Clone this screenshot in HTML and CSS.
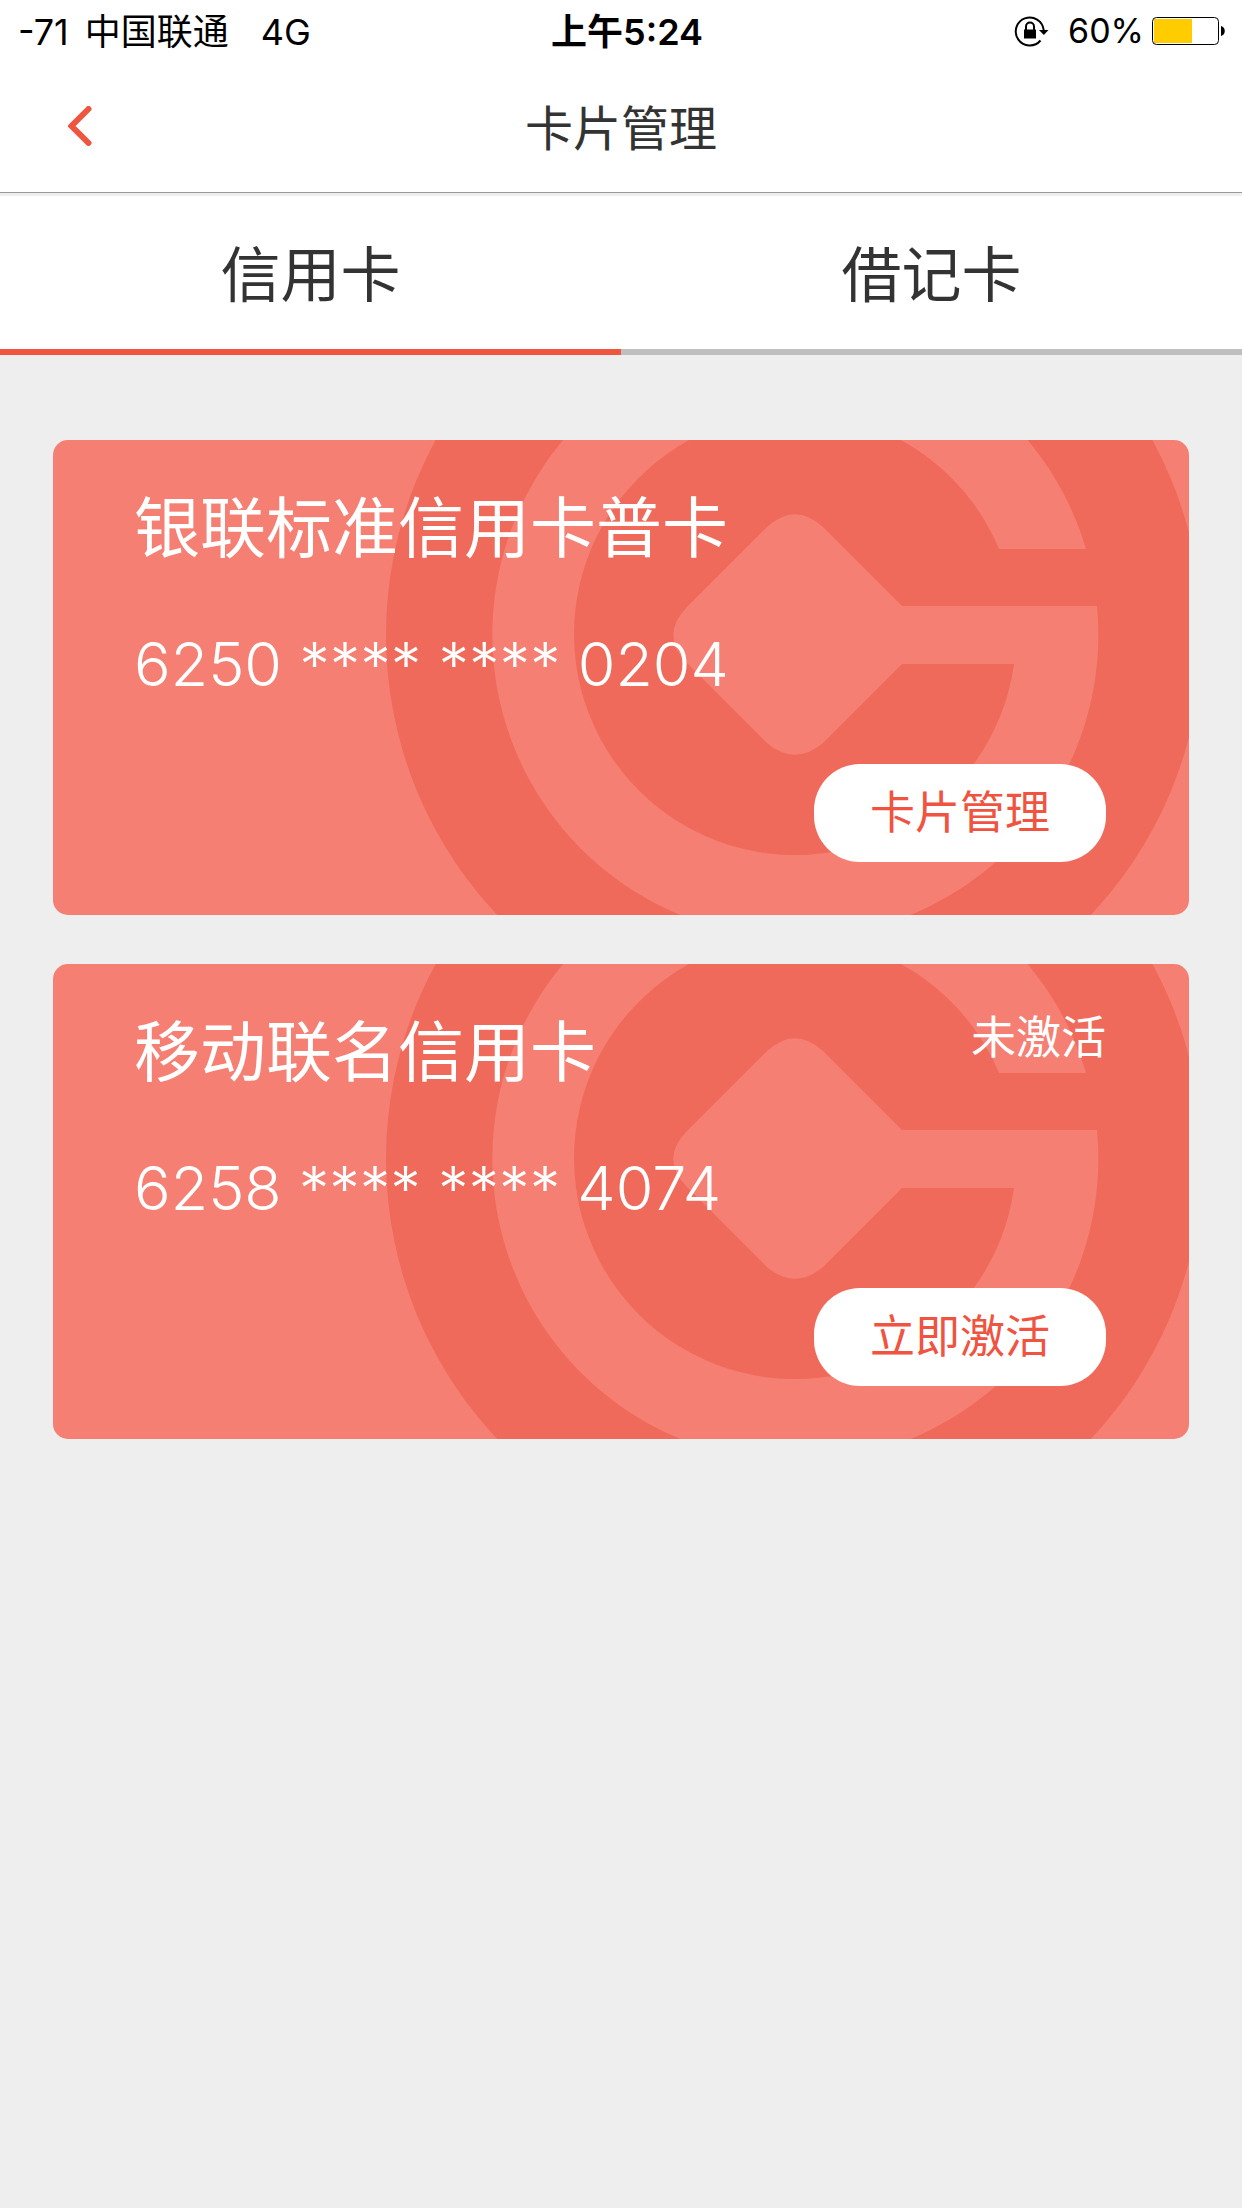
FILE: index.html
```html
<!DOCTYPE html>
<html lang="zh-CN">
<head>
<meta charset="utf-8">
<meta name="viewport" content="width=device-width, initial-scale=1">
<title>卡片管理</title>
<link rel="stylesheet" href="styles.css">
</head>
<body>
<svg class="defs" aria-hidden="true">
  <symbol id="emblem" viewBox="0 0 1136 475" preserveAspectRatio="xMaxYMid slice">
    <circle class="emblem-dark" cx="741" cy="195" r="408"/>
    <path class="emblem-light" fill-rule="evenodd" d="M1033 109A303 303 0 1 0 1044 166H849L769.500 86.500Q742 62 714.500 86.500L633.500 167.500Q607 195 633.500 222.500L714.500 303.500Q742 326 769.500 303.500L849 224H961A221 221 0 1 1 946 109Z"/>
  </symbol>
</svg>
<div class="status-bar">
  <div class="carrier"><span>-71</span><span>中国联通</span><span class="network">4G</span></div>
  <div class="clock">上午5:24</div>
  <div class="indicators">
    <svg class="lock" viewBox="0 0 36 32" aria-hidden="true">
      <path d="M26.500 25.500A14 14 0 1 1 29.700 15" fill="none" stroke="#000" stroke-width="2"/>
      <path d="M25 15h9.500l-4.700 5z"/>
      <path d="M10 14.500h12v9H10z"/>
      <path d="M12 15v-3.500a4 4 0 0 1 8 0V15" fill="none" stroke="#000" stroke-width="2"/>
    </svg>
    <span>60%</span>
    <svg class="battery" viewBox="0 0 74 30" aria-hidden="true">
      <rect x="0.500" y="1.500" width="66" height="27" rx="4" fill="#fff" stroke="#000"/>
      <path d="M2 3h38v24H2z" fill="#fc0"/>
      <path d="M69 10c5 1 5 9 0 10z"/>
    </svg>
  </div>
</div>
<header class="nav">
  <button class="back" type="button" aria-label="返回">
    <svg viewBox="0 0 24 40" aria-hidden="true"><path d="M20.500 3L3.500 20l17 17"/></svg>
  </button>
  <h1 class="nav-title">卡片管理</h1>
</header>
<nav class="tabs">
  <button class="tab tab-active" type="button">信用卡</button>
  <button class="tab" type="button">借记卡</button>
</nav>
<main class="cards">
  <section class="card">
    <svg class="card-art" aria-hidden="true"><use href="#emblem"/></svg>
    <div class="card-head"><h2 class="card-name">银联标准信用卡普卡</h2></div>
    <p class="card-number">6250 **** **** 0204</p>
    <button class="card-action" type="button">卡片管理</button>
  </section>
  <section class="card">
    <svg class="card-art" aria-hidden="true"><use href="#emblem"/></svg>
    <div class="card-head"><h2 class="card-name">移动联名信用卡</h2><span class="card-state">未激活</span></div>
    <p class="card-number">6258 **** **** 4074</p>
    <button class="card-action" type="button">立即激活</button>
  </section>
</main>
</body>
</html>
```
FILE: styles.css
```css
* { box-sizing: border-box; }

body {
  margin: 0;
  min-height: 100vh;
  background: #eee;
  color: #333;
  font-family: Inter, "Noto Sans CJK SC", sans-serif;
  font-weight: 400;
}

h1, h2, p { margin: 0; font-weight: inherit; }

button {
  margin: 0;
  padding: 0;
  border: 0;
  background: none;
  color: inherit;
  font: inherit;
}

.defs { display: block; width: 0; height: 0; }

.status-bar {
  display: grid;
  grid-template-columns: 1fr auto 1fr;
  align-items: center;
  height: 62px;
  padding: 0 16px 0 18px;
  background: #fff;
  color: #000;
  font-family: Inter, "Noto Sans CJK TC", sans-serif;
  font-size: 36px;
  line-height: 60px;
}

.carrier { display: flex; gap: 16px; padding-top: 2px; }
.network { margin-left: 16px; }
.clock { padding: 2px 0 0 10px; font-weight: 600; }
.indicators { display: flex; justify-content: flex-end; align-items: center; font-size: 34px; }
.lock { width: 36px; height: 32px; margin-right: 18px; }
.battery { width: 74px; height: 30px; margin-left: 8px; }

.nav {
  display: grid;
  grid-template-columns: 1fr auto 1fr;
  align-items: center;
  height: 131px;
  padding: 0 68px 2px;
  border-bottom: 1px solid #999;
  background: #fff;
}

.back { display: flex; justify-self: start; }
.back svg {
  width: 24px;
  height: 40px;
  fill: none;
  stroke: #f0563f;
  stroke-width: 6;
  stroke-linecap: round;
}

.nav-title { padding-top: 5px; font-size: 48px; line-height: 60px; }

.tabs { display: flex; border-top: 3px solid #eee; background: #fff; }

.tab {
  flex: 1;
  padding-top: 6px;
  border-bottom: 6px solid #bfbfbf;
  font-size: 60px;
  line-height: 147px;
}

.tab-active { border-color: #f0563f; }

.cards {
  display: flex;
  flex-direction: column;
  gap: 49px;
  padding: 85px 53px;
}

.card {
  position: relative;
  display: flex;
  flex-direction: column;
  padding: 55px 83px 53px 81px;
  border-radius: 15px;
  overflow: hidden;
  background: #f57f73;
  color: #fff;
}

.card-art { position: absolute; inset: 0; width: 100%; height: 100%; }
.emblem-dark { fill: #ef6a5a; }
.emblem-light { fill: #f57f73; }

.card-head, .card-number, .card-action { position: relative; }
.card-head { display: flex; justify-content: space-between; }
.card-name { font-size: 66px; line-height: 66px; }
.card-state { font-size: 45px; line-height: 38px; }
.card-number { margin-top: 73px; font-size: 61px; font-weight: 300; line-height: 60px; }

.card-action {
  align-self: flex-end;
  width: 292px;
  margin-top: 70px;
  border-radius: 46px;
  background: #fff;
  color: #f0533f;
  font-size: 45px;
  line-height: 98px;
}
```
